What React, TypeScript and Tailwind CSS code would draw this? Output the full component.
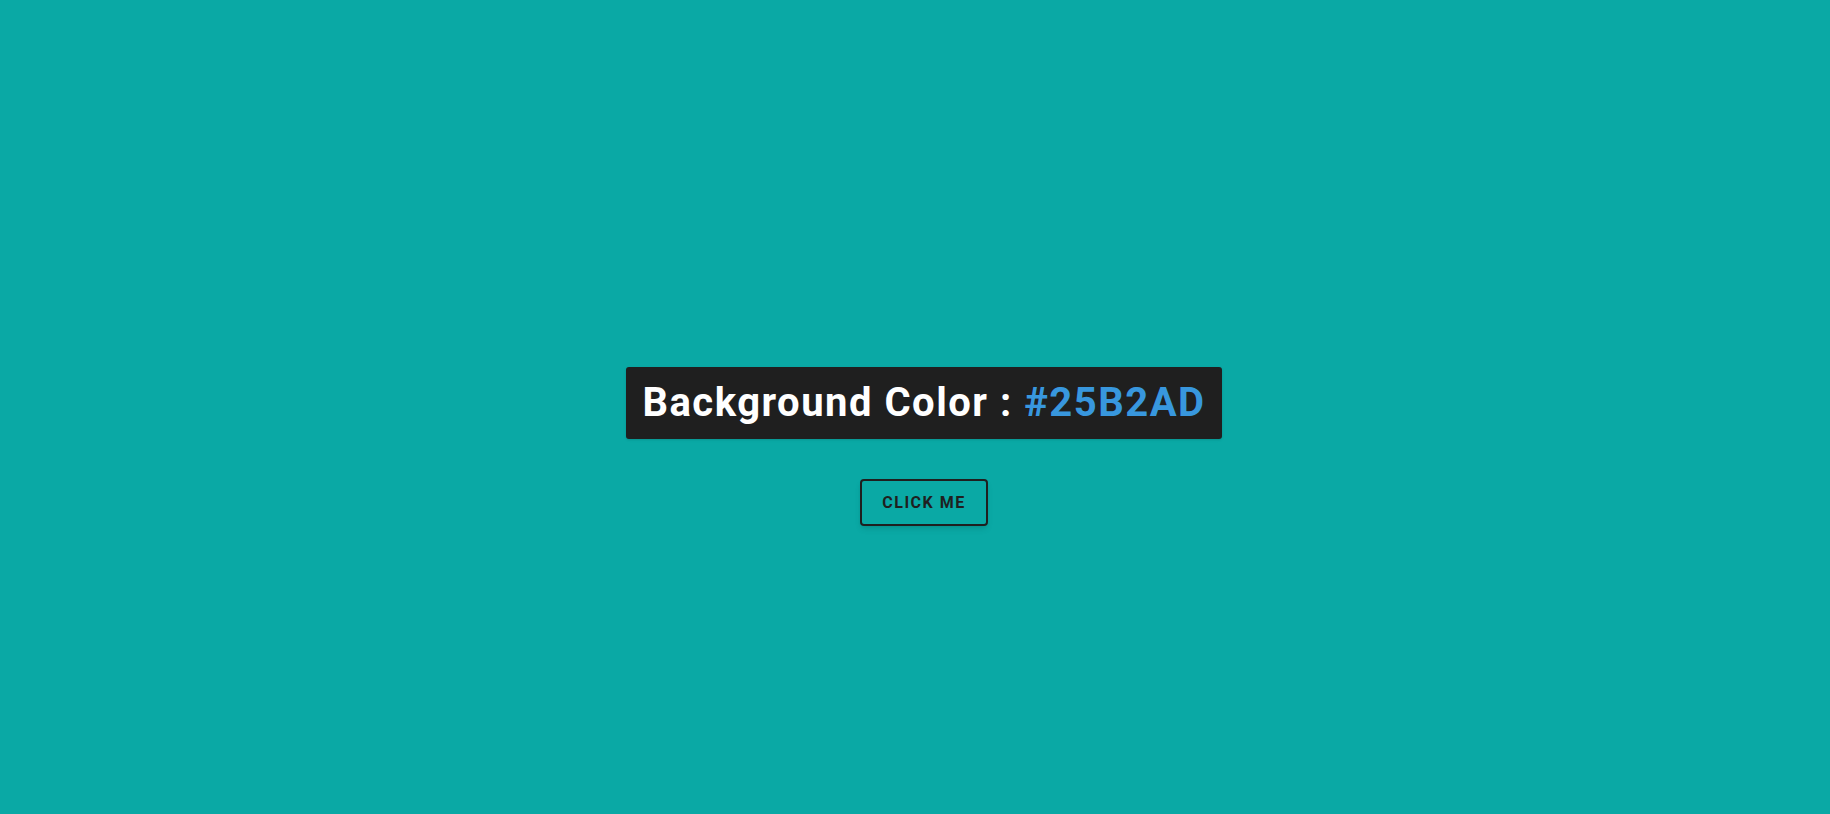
export default function App() {
    return (
        <div className="w-full h-screen bg-[#0aa9a5] flex flex-col items-center justify-center pt-[79px] pl-[18px] font-['Roboto',sans-serif]">
            {/* Color label */}
            <div className="h-[72px] px-4 flex items-center bg-[#1f1f1f] rounded-[3px] shadow-sm">
                <h1 className="text-[40px] font-bold text-white tracking-[1.5px] leading-none">
                    Background Color : <span className="text-[#3897de]">#25B2AD</span>
                </h1>
            </div>

            <button className="mt-10 w-[128px] h-[47px] border-2 border-[#1f1f1f] rounded-[4px] shadow-md text-[16px] font-bold tracking-[1.5px] text-[#1f1f1f] uppercase">
                Click me
            </button>
        </div>
    );
}
